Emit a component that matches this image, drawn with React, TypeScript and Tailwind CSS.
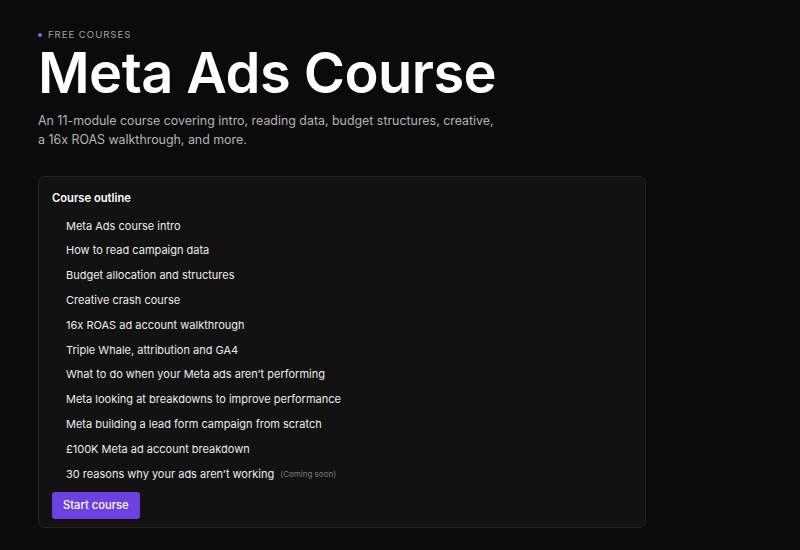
const LESSONS = [
  "Meta Ads course intro",
  "How to read campaign data",
  "Budget allocation and structures",
  "Creative crash course",
  "16x ROAS ad account walkthrough",
  "Triple Whale, attribution and GA4",
  "What to do when your Meta ads aren\u2019t performing",
  "Meta looking at breakdowns to improve performance",
  "Meta building a lead form campaign from scratch",
  "\u00a3100K Meta ad account breakdown",
];

export default function App() {
  return (
    <div className="min-h-screen bg-[#0b0b0c] font-['Inter',sans-serif] text-white">
      <div className="px-[38px] pt-[29px]">
        <div className="flex items-center gap-[6px] h-[12px] text-[9.6px] tracking-[0.1em] text-[#a3a3a3]">
          <span className="w-[4px] h-[4px] rounded-full bg-[#8b5cf6]" />
          FREE COURSES
        </div>
        <h1 className="mt-[2px] text-[56px] leading-[60px] font-semibold tracking-[-0.01em] text-white">Meta Ads Course</h1>
        <p className="mt-[8px] w-[462px] text-[12.4px] leading-[19px] text-[#b5b5b5]">
          An 11-module course covering intro, reading data, budget structures, creative, a 16x ROAS walkthrough, and more.
        </p>

        <div className="mt-[27px] w-[608px] rounded-[6px] border border-[#222224] bg-[#121213] px-[13px] pt-[14px] pb-[8px]">
          <h2 className="h-[14px] text-[11.2px] leading-[14px] font-semibold text-white">Course outline</h2>
          <ul className="mt-[8.5px] pl-[14px]">
            {LESSONS.map((l) => (
              <li key={l} className="h-[24.8px] flex items-center text-[11px] text-[#ececec]">{l}</li>
            ))}
            <li className="h-[24.8px] flex items-center text-[11px] text-[#ececec]">
              30 reasons why your ads aren’t working
              <span className="ml-[6px] text-[8px] text-[#7d7d7d]">(Coming soon)</span>
            </li>
          </ul>
          <button className="block mt-[5.5px] h-[27px] px-[11px] rounded-[3px] bg-[#6d40e2] text-[11.2px] font-medium text-white">Start course</button>
        </div>
      </div>
    </div>
  );
}
